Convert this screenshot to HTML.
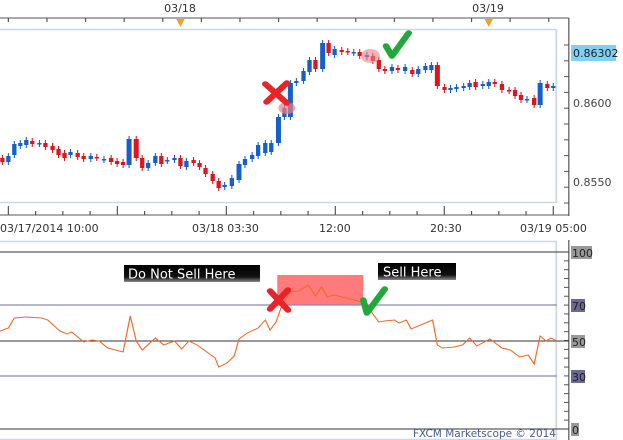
<!DOCTYPE html>
<html><head><meta charset="utf-8"><style>
html,body{margin:0;padding:0;background:#fff;width:623px;height:440px;overflow:hidden}
svg{display:block;font-family:"DejaVu Sans","Liberation Sans",sans-serif}
</style></head><body>
<svg id="s" width="623" height="440" viewBox="0 0 623 440" xmlns="http://www.w3.org/2000/svg">
<rect width="623" height="440" fill="#fff"/>
<defs><linearGradient id="g" x1="0" y1="0" x2="0" y2="1"><stop offset="0" stop-color="#000"/><stop offset="0.7" stop-color="#111"/><stop offset="1" stop-color="#888"/></linearGradient></defs>
<g transform="scale(1.195,1)">
<line x1="0" y1="18" x2="476" y2="18" stroke="#555" stroke-width="1"/>
<g id="tt" stroke="#555"></g>
<path d="M147.5 19 L154.5 19 L151 27 Z" fill="#f4a020"/>
<path d="M405.5 19 L412.5 19 L409 27 Z" fill="#f4a020"/>
<rect x="-1" y="29.5" width="466.5" height="173" fill="none" stroke="#cdd8e4" stroke-width="1.5"/>
<line x1="476" y1="18" x2="476" y2="216" stroke="#555"/>
<line x1="0" y1="215" x2="476" y2="215" stroke="#555"/>
<g id="bt" stroke="#555"></g>
<g id="rt" stroke="#555"></g>
<g id="c"></g>
<ellipse cx="240" cy="108" rx="7" ry="6" fill="#f08080" opacity="0.7"/>
<ellipse cx="310" cy="56" rx="8" ry="7" fill="#f08080" opacity="0.6"/>
<path d="M222 84 L240 103 M240 83 L223 102" stroke="#e8232a" stroke-width="5.5" stroke-linecap="round"/>
<path d="M323 46 L328 56 L342 33" stroke="#22a83a" stroke-width="5.5" fill="none" stroke-linecap="round" stroke-linejoin="round"/>
<rect x="-1" y="241.5" width="466.5" height="198" fill="none" stroke="#cdd8e4" stroke-width="1.5"/>
<line x1="476" y1="240" x2="476" y2="440" stroke="#555"/>
<g id="rt2" stroke="#555"></g>
<rect x="232" y="275" width="72" height="30" fill="#ff7b7b"/>
<line x1="0" y1="252" x2="476" y2="252" stroke="#333"/>
<line x1="0" y1="305" x2="466" y2="305" stroke="#8b8bab" stroke-width="1.3"/>
<line x1="0" y1="341" x2="476" y2="341" stroke="#333"/>
<line x1="0" y1="376" x2="466" y2="376" stroke="#8b8bab" stroke-width="1.3"/>
<line x1="0" y1="429" x2="476" y2="429" stroke="#333"/>
<polyline fill="none" stroke="#f06a2a" stroke-width="1" points="0,331 7,328 12,318 22,317 35,318 40,320 50,331 56,334 60,332 70,342 77,340 83,341 90,348 103,352 109,316 114,341 119,350 130,338 137,345 146,341 152,349 158,341 165,345 180,358 183,367 190,363 196,356 200,339 207,333 216,328 222,320 226,330 231,322 236,305 243,292 250,291 258,285 264,296 269,287 274,297 280,295 286,297 300,301 307,305 312,314 317,322 322,321 330,320 334,323 340,320 344,329 362,320 366,345 370,348 380,347 387,345 393,338 399,346 410,339 420,348 427,350 435,357 442,355 447,364 452,336 457,341 461,338 466,341"/>
<path d="M226 291 L241 310 M241 290 L226 309" stroke="#e8232a" stroke-width="5.5" stroke-linecap="round"/>
<path d="M304 300 L307 313 L322 289" stroke="#22a83a" stroke-width="5.5" fill="none" stroke-linecap="round" stroke-linejoin="round"/>
</g>
<text x="180" y="12" font-size="11" fill="#333" text-anchor="middle">03/18</text>
<text x="488" y="12" font-size="11" fill="#333" text-anchor="middle">03/19</text>
<rect x="571" y="45" width="45" height="16" fill="#7fd0f4"/>
<text x="573" y="57" font-size="11" fill="#222">0.86302</text>
<text x="573" y="107" font-size="11" fill="#444">0.8600</text>
<text x="573" y="186" font-size="11" fill="#444">0.8550</text>
<text x="0" y="232" font-size="11" fill="#333">03/17/2014 10:00</text>
<text x="192" y="232" font-size="11" fill="#333">03/18 03:30</text>
<text x="319" y="232" font-size="11" fill="#333">12:00</text>
<text x="430" y="232" font-size="11" fill="#333">20:30</text>
<text x="520" y="232" font-size="11" fill="#333">03/19 05:00</text>
<rect x="571" y="246" width="21" height="13" fill="#999"/><text x="572" y="257" font-size="11" fill="#222">100</text>
<rect x="571" y="299" width="14" height="13" fill="#6a6a95"/><text x="572" y="310" font-size="11" fill="#222">70</text>
<rect x="571" y="335" width="14" height="13" fill="#999"/><text x="572" y="346" font-size="11" fill="#222">50</text>
<rect x="571" y="370" width="14" height="13" fill="#6a6a95"/><text x="572" y="381" font-size="11" fill="#222">30</text>
<rect x="571" y="423" width="8" height="13" fill="#999"/><text x="572" y="434" font-size="11" fill="#222">0</text>
<rect x="124" y="265" width="136" height="17" fill="url(#g)"/>
<text x="128" y="278.5" font-size="13" fill="#fff">Do Not Sell Here</text>
<rect x="378" y="263" width="78" height="17" fill="url(#g)"/>
<text x="383" y="276.5" font-size="13" fill="#fff">Sell Here</text>
<text x="413" y="437" font-size="10.5" fill="#4a5a8a">FXCM Marketscope © 2014</text>
</svg>
<script>
var NS="http://www.w3.org/2000/svg";
function el(p,t,a){var e=document.createElementNS(NS,t);for(var k in a)e.setAttribute(k,a[k]);document.getElementById(p).appendChild(e);}
for(var x=7;x<476;x+=32.3){el("tt","line",{x1:x,y1:18,x2:x,y2:22});}
for(var i=0;i<=20;i++){var x=7+i*22.8;var big=(i%4==0);el("bt","line",{x1:x,y1:215-(big?9:4),x2:x,y2:215});}
for(var y=45;y<205;y+=15.8){el("rt","line",{x1:472,y1:y,x2:476,y2:y});}
for(var y=252;y<=429;y+=8.85){el("rt2","line",{x1:472,y1:y,x2:476,y2:y});}
var C=[[2,158,162,"r"],[7,156,162,"b"],[12,144,155,"b"],[17,143,146,"b"],[22,140,145,"b"],[27,141,144,"r"],[33,143,144,"b"],[38,143,147,"r"],[44,146,150,"r"],[49,149,155,"r"],[54,153,158,"r"],[59,152,155,"b"],[65,153,157,"r"],[70,156,159,"r"],[76,156,159,"b"],[81,157,158,"r"],[87,159,160,"b"],[93,158,162,"r"],[98,161,164,"r"],[103,162,165,"r"],[108,139,165,"b"],[114,139,158,"r"],[119,158,168,"r"],[124,163,168,"b"],[130,156,163,"b"],[135,156,164,"r"],[140,160,161,"b"],[146,158,160,"b"],[151,158,166,"r"],[156,161,167,"b"],[162,160,163,"r"],[167,163,167,"r"],[172,168,174,"r"],[178,174,181,"r"],[183,181,188,"r"],[188,185,187,"b"],[194,178,186,"b"],[200,164,180,"b"],[205,159,165,"b"],[211,155,159,"b"],[216,145,156,"b"],[222,143,153,"b"],[227,143,152,"b"],[233,117,143,"b"],[238,108,117,"b"],[243,83,117,"b"],[248,81,83,"b"],[254,71,81,"b"],[259,60,72,"b"],[264,60,69,"r"],[270,43,69,"b"],[275,43,53,"r"],[280,49,55,"b"],[286,50,52,"r"],[291,51,52,"r"],[296,52,53,"b"],[301,52,56,"r"],[307,55,57,"b"],[312,56,61,"r"],[317,60,69,"r"],[322,69,71,"r"],[328,67,71,"b"],[333,68,70,"r"],[339,67,71,"b"],[345,70,74,"r"],[350,69,74,"b"],[356,66,70,"b"],[361,65,70,"b"],[366,65,86,"r"],[372,87,90,"r"],[377,88,90,"b"],[382,87,89,"b"],[388,86,88,"b"],[393,83,87,"b"],[398,82,87,"r"],[404,84,86,"b"],[409,82,86,"b"],[414,82,84,"r"],[420,84,90,"r"],[426,90,91,"r"],[431,90,96,"r"],[436,95,100,"r"],[441,99,100,"b"],[447,98,105,"r"],[452,83,105,"b"],[458,84,88,"r"],[463,86,88,"b"]];
C.forEach(function(c){var col=c[3]=="r"?"#e0141e":"#1560c8";var w=(c[2]-c[1]>12)?4.2:3.6;
el("c","line",{x1:c[0],y1:c[1]-3,x2:c[0],y2:c[2]+3,stroke:col,"stroke-width":0.9});
el("c","rect",{x:c[0]-w/2,y:c[1],width:w,height:Math.max(1.5,c[2]-c[1]),fill:col});});
</script>
</body></html>
